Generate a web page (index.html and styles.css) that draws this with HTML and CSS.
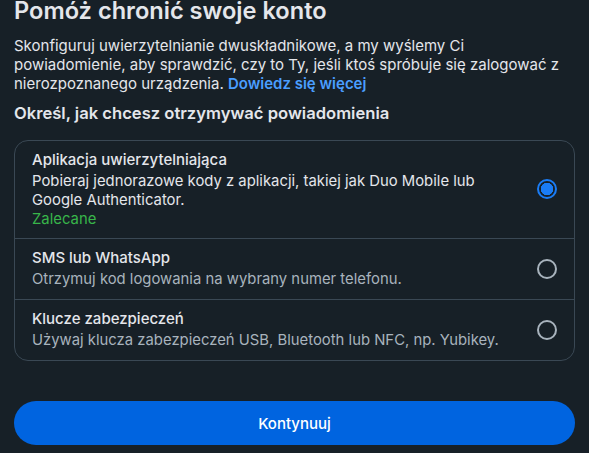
FILE: index.html
```html
<!DOCTYPE html>
<html lang="pl">
<head>
<meta charset="utf-8">
<link rel="stylesheet" href="styles.css">
</head>
<body>
<div class="page">
  <h1 class="title">Pomóż chronić swoje konto</h1>
  <p class="intro">Skonfiguruj uwierzytelnianie dwuskładnikowe, a my wyślemy Ci powiadomienie, aby sprawdzić, czy to Ty, jeśli ktoś spróbuje się zalogować z nierozpoznanego urządzenia. <a class="link" href="#">Dowiedz się więcej</a></p>
  <h2 class="subtitle">Określ, jak chcesz otrzymywać powiadomienia</h2>
  <div class="options">
    <label class="option">
      <div class="option-text">
        <div class="option-title">Aplikacja uwierzytelniająca</div>
        <div class="option-desc selected-desc">Pobieraj jednorazowe kody z aplikacji, takiej jak Duo Mobile lub Google Authenticator.</div>
        <div class="option-desc recommended">Zalecane</div>
      </div>
      <span class="radio checked"></span>
    </label>
    <label class="option">
      <div class="option-text">
        <div class="option-title">SMS lub WhatsApp</div>
        <div class="option-desc">Otrzymuj kod logowania na wybrany numer telefonu.</div>
      </div>
      <span class="radio"></span>
    </label>
    <label class="option">
      <div class="option-text">
        <div class="option-title">Klucze zabezpieczeń</div>
        <div class="option-desc">Używaj klucza zabezpieczeń USB, Bluetooth lub NFC, np. Yubikey.</div>
      </div>
      <span class="radio"></span>
    </label>
  </div>
  <button class="continue">Kontynuuj</button>
</div>
</body>
</html>
```

FILE: styles.css
```css
html, body {
  margin: 0;
  padding: 0;
  background: #172027;
}
body {
  font-family: Inter, "Noto Sans", "DejaVu Sans", sans-serif;
  color: #e4e6eb;
  overflow: hidden;
}
.page {
  padding: 0 14px;
  display: flex;
  flex-direction: column;
}
.title {
  margin: -3px 0 0;
  font-size: 23.6px;
  line-height: 28px;
  font-weight: 600;
  color: #e4e6eb;
}
.intro {
  margin: 11px 0 0;
  font-size: 15px;
  line-height: 19px;
  color: #e4e6eb;
}
.link {
  color: #4a9eff;
  font-weight: 600;
  text-decoration: none;
}
.subtitle {
  margin: 9px 0 0;
  font-size: 16.6px;
  line-height: 22px;
  font-weight: 600;
  color: #e4e6eb;
}
.options {
  margin-top: 16px;
  border: 1px solid #3a4854;
  border-radius: 14px;
  display: flex;
  flex-direction: column;
}
.option {
  display: flex;
  align-items: center;
  gap: 16px;
  padding: 9px 17px 10px;
  border-top: 1px solid #3a4854;
}
.option:first-child {
  border-top: none;
}
.option-text {
  flex: 1;
  display: flex;
  flex-direction: column;
}
.option-title {
  font-size: 15px;
  line-height: 20px;
  font-weight: 500;
  color: #e4e6eb;
  margin-bottom: 2px;
}
.option-desc {
  font-size: 14.85px;
  line-height: 19px;
  color: #a8b3bd;
}
.option-desc.selected-desc {
  color: #e4e6eb;
}
.option-desc.recommended {
  color: #38b54a;
  line-height: 18px;
}
.radio {
  flex: none;
  width: 20px;
  height: 20px;
  box-sizing: border-box;
  border-radius: 50%;
  border: 2px solid #a8b3bd;
}
.radio.checked {
  border-color: #1a7cf5;
  background: radial-gradient(circle, #1a7cf5 0 6px, transparent 6.5px);
}
.continue {
  margin-top: 40px;
  height: 44px;
  border: none;
  border-radius: 22px;
  background: #0064e0;
  color: #ffffff;
  font-family: inherit;
  font-size: 15px;
  font-weight: 500;
}
```
